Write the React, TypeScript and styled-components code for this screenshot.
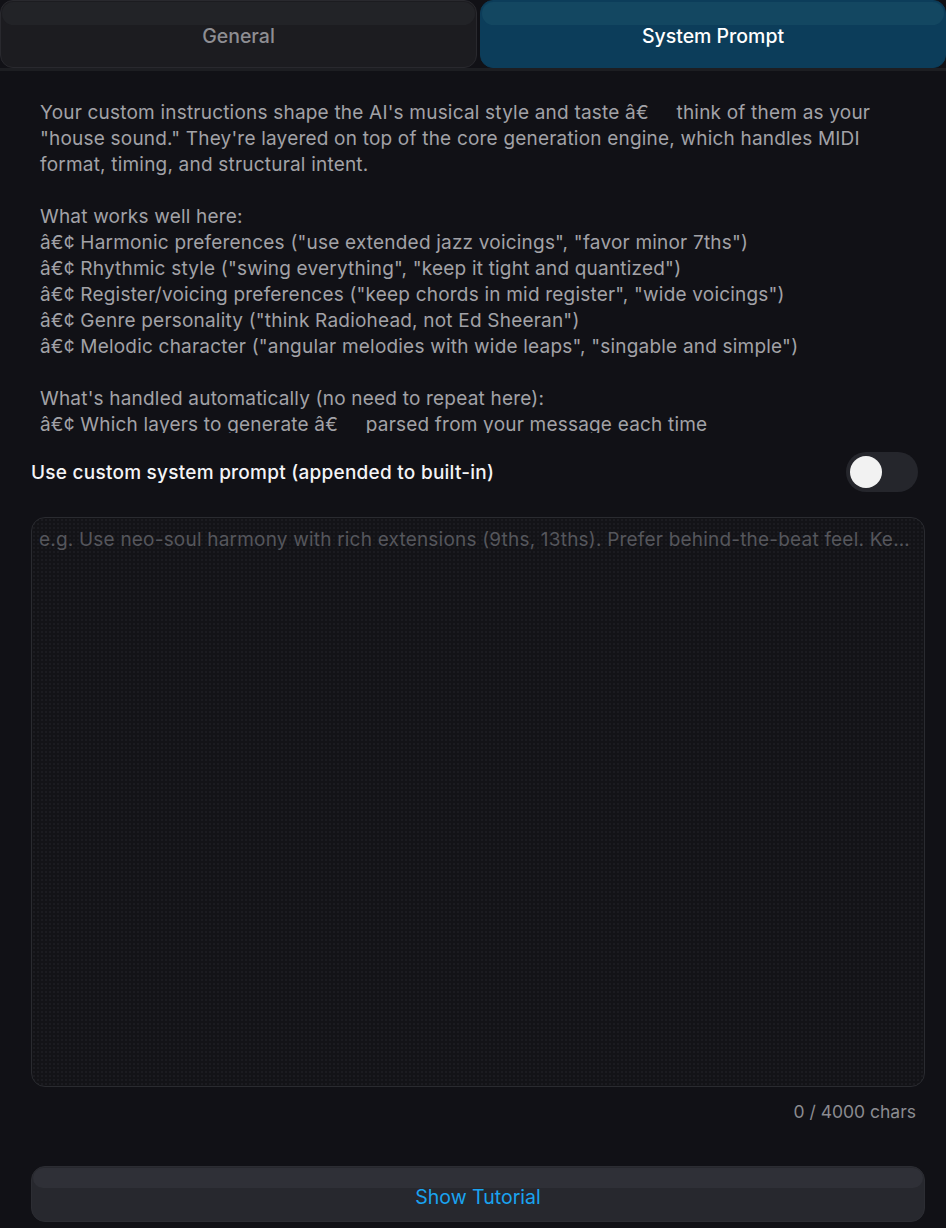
import { useState } from "react";
import styled, { createGlobalStyle } from "styled-components";

const GlobalStyle = createGlobalStyle`
  html, body {
    margin: 0;
    padding: 0;
    background: #111116;
  }
  body {
    font-family: Inter, "Noto Sans", "Liberation Sans", sans-serif;
    -webkit-font-smoothing: antialiased;
  }
`;

const EM = "â€\u00a0\u00a0\u00a0\u00a0 ";
const BULLET = "â€¢ ";

const introLines = [
  `Your custom instructions shape the AI's musical style and taste ${EM}think of them as your`,
  `"house sound." They're layered on top of the core generation engine, which handles MIDI`,
  "format, timing, and structural intent.",
  "",
  "What works well here:",
  `${BULLET}Harmonic preferences ("use extended jazz voicings", "favor minor 7ths")`,
  `${BULLET}Rhythmic style ("swing everything", "keep it tight and quantized")`,
  `${BULLET}Register/voicing preferences ("keep chords in mid register", "wide voicings")`,
  `${BULLET}Genre personality ("think Radiohead, not Ed Sheeran")`,
  `${BULLET}Melodic character ("angular melodies with wide leaps", "singable and simple")`,
  "",
  "What's handled automatically (no need to repeat here):",
  `${BULLET}Which layers to generate ${EM}parsed from your message each time`,
  `${BULLET}Key, tempo and bar count ${EM}read from the session`,
];

export default function App() {
  const [tab, setTab] = useState<"general" | "system">("system");
  const [enabled, setEnabled] = useState(false);
  const [prompt, setPrompt] = useState("");

  return (
    <S.Page>
      <GlobalStyle />
      <S.TabBar>
        <S.Tab $grow={477} $active={tab === "general"} onClick={() => setTab("general")}>
          General
        </S.Tab>
        <S.Tab $grow={466} $active={tab === "system"} onClick={() => setTab("system")}>
          System Prompt
        </S.Tab>
      </S.TabBar>

      <S.Body>
        <S.Intro>
          {introLines.map((line, i) => (
            <S.Line key={i}>{line || "\u00a0"}</S.Line>
          ))}
        </S.Intro>

        <S.ToggleRow>
          <S.ToggleLabel>Use custom system prompt (appended to built-in)</S.ToggleLabel>
          <S.Switch $on={enabled} onClick={() => setEnabled(!enabled)} aria-pressed={enabled}>
            <S.Knob />
          </S.Switch>
        </S.ToggleRow>

        <S.Editor>
          <S.TextArea value={prompt} onChange={(e) => setPrompt(e.target.value.slice(0, 4000))} />
          {prompt === "" && (
            <S.Placeholder>
              e.g. Use neo-soul harmony with rich extensions (9ths, 13ths). Prefer behind-the-beat feel. Keep
              voicings warm and close.
            </S.Placeholder>
          )}
        </S.Editor>
        <S.CharCount>{prompt.length} / 4000 chars</S.CharCount>

        <S.TutorialButton>Show Tutorial</S.TutorialButton>
      </S.Body>
    </S.Page>
  );
}

const S = {
  Page: styled.div`
    width: 946px;
    height: 1228px;
    display: flex;
    flex-direction: column;
    background: #111116;
    overflow: hidden;
  `,
  TabBar: styled.div`
    display: flex;
    gap: 3px;
    height: 68px;
    border-bottom: 3px solid #1d1e22;
  `,
  Tab: styled.button<{ $active: boolean; $grow: number }>`
    flex: ${(p) => p.$grow} 1 0;
    position: relative;
    border-radius: 13px;
    border: 1px solid ${(p) => (p.$active ? "#0c3d5a" : "#29292e")};
    background: ${(p) => (p.$active ? "#0c3d5a" : "#1c1c20")};
    color: ${(p) => (p.$active ? "#ffffff" : "#8e8e93")};
    font-family: inherit;
    font-size: 19.5px;
    font-weight: 500;
    padding: 4px 0 0;
    cursor: pointer;
    &::before {
      content: "";
      position: absolute;
      top: 1px;
      left: 1px;
      right: 1px;
      height: 23px;
      border-radius: 12px;
      background: ${(p) => (p.$active ? "#134761" : "#222327")};
    }
  `,
  Body: styled.div`
    flex: 1;
    display: flex;
    flex-direction: column;
    padding: 0 21px 6px 31px;
  `,
  Intro: styled.div`
    margin-top: 29px;
    padding-left: 9px;
    height: 333px;
    overflow: hidden;
    color: #a2a2a7;
    font-size: 19px;
    letter-spacing: 0.2px;
    line-height: 26px;
  `,
  Line: styled.div`
    white-space: pre;
  `,
  ToggleRow: styled.div`
    display: flex;
    align-items: center;
    justify-content: space-between;
    margin-top: 19px;
    padding-right: 7px;
    height: 40px;
  `,
  ToggleLabel: styled.span`
    color: #f4f4f6;
    font-size: 19px;
    letter-spacing: 0.25px;
    font-weight: 500;
  `,
  Switch: styled.button<{ $on: boolean }>`
    width: 72px;
    height: 40px;
    border: none;
    border-radius: 20px;
    padding: 4px;
    display: flex;
    justify-content: ${(p) => (p.$on ? "flex-end" : "flex-start")};
    align-items: center;
    background: ${(p) => (p.$on ? "#0a84c6" : "#25262c")};
    cursor: pointer;
  `,
  Knob: styled.span`
    width: 32px;
    height: 32px;
    border-radius: 50%;
    background: #f2f2f2;
  `,
  Editor: styled.div`
    position: relative;
    margin-top: 25px;
    height: 568px;
    border: 1px solid #2a2b30;
    border-radius: 14px;
    background-color: #131317;
    background-image: radial-gradient(#1b1b20 0.8px, transparent 0.9px);
    background-size: 4px 4px;
    overflow: hidden;
  `,
  TextArea: styled.textarea`
    width: 100%;
    height: 100%;
    box-sizing: border-box;
    padding: 10px 8px;
    border: none;
    outline: none;
    resize: none;
    background: transparent;
    color: #e6e6ea;
    font-family: inherit;
    font-size: 19px;
    line-height: 26px;
  `,
  Placeholder: styled.div`
    position: absolute;
    top: 9px;
    left: 7px;
    right: 10px;
    color: #55565c;
    font-size: 19px;
    letter-spacing: 0.2px;
    line-height: 26px;
    white-space: nowrap;
    overflow: hidden;
    text-overflow: ellipsis;
    pointer-events: none;
  `,
  CharCount: styled.div`
    margin-top: 13px;
    padding-right: 9px;
    text-align: right;
    color: #8b8b90;
    font-size: 17.5px;
    line-height: 24px;
  `,
  TutorialButton: styled.button`
    position: relative;
    margin-top: auto;
    height: 56px;
    border-radius: 14px;
    border: 1px solid #2c2d33;
    background: #27282e;
    color: #1aa3f0;
    font-family: inherit;
    font-size: 19.5px;
    padding: 6px 0 0;
    cursor: pointer;
    &::before {
      content: "";
      position: absolute;
      top: 1px;
      left: 1px;
      right: 1px;
      height: 20px;
      border-radius: 12px;
      background: #2f3037;
    }
  `,
};
